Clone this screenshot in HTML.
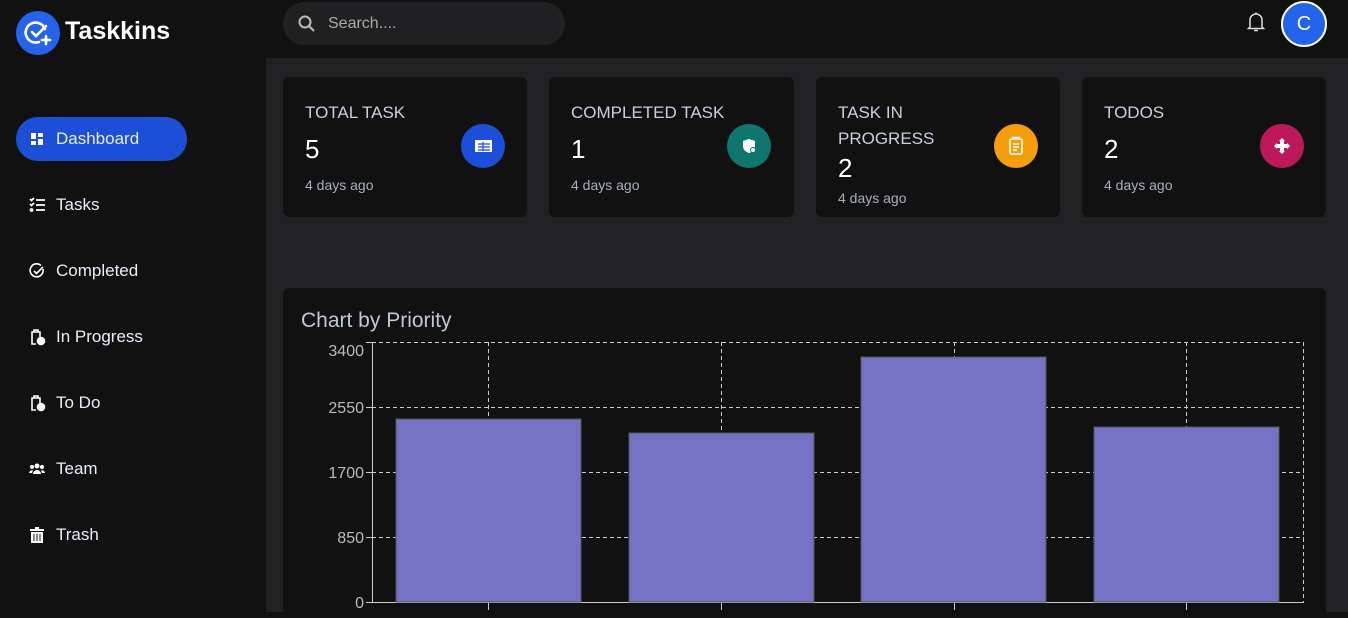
<!DOCTYPE html>
<html><head><style>
*{margin:0;padding:0;box-sizing:border-box}
body{width:1348px;height:612px;overflow:hidden;background:#111;font-family:"Liberation Sans",sans-serif;color:#fff;position:relative}
.abs{position:absolute}
.main{left:266px;top:58px;width:1082px;height:554px;background:#212123}
.card{background:#111;border-radius:6px;position:absolute;top:77px;height:140px;width:244px}
.card .t{position:absolute;left:22px;top:23px;font-size:17px;color:#c8d0e0;line-height:26px;width:200px}
.card .n{position:absolute;left:22px;font-size:26px;color:#fff}
.card .d{position:absolute;left:22px;font-size:14px;color:#a8b0bc}
.card .c{position:absolute;left:178px;top:47px;width:44px;height:44px;border-radius:50%}
.nav{position:absolute;left:28px;font-size:17px;color:#e8eef8;display:flex;align-items:center;gap:10px}
.nav svg{width:18px;height:18px}
</style></head><body>
<div class="abs" style="left:16px;top:11px;width:44px;height:44px;border-radius:50%;background:#2563eb">
<svg width="44" height="44" viewBox="0 0 44 44" fill="none" stroke="#fff" stroke-width="2.6" stroke-linecap="round"><path d="M29 18a10 10 0 1 0-6 13"/><path d="M16 21l4 4 10-10"/><path d="M30 25v8M26 29h8"/></svg></div>
<div class="abs" style="left:65px;top:17px;font-size:25px;font-weight:bold">Taskkins</div>
<div class="abs" style="left:16px;top:117px;width:171px;height:44px;border-radius:22px;background:#1d4ed8"></div>
<div class="nav" style="top:129px"><svg viewBox="0 0 18 18" fill="#fff"><rect x="3" y="3" width="5" height="6"/><rect x="10" y="3" width="5" height="4"/><rect x="3" y="11" width="5" height="4"/><rect x="10" y="9" width="5" height="6"/></svg>Dashboard</div>
<div class="nav" style="top:195px"><svg viewBox="0 0 18 18" stroke="#fff" stroke-width="1.8" fill="none"><path d="M2 3l1.5 1.5L6 2M2 8l1.5 1.5L6 7M8 4h9M8 9h9M8 14h9"/><circle cx="3.5" cy="14" r="1" fill="#fff"/></svg>Tasks</div>
<div class="nav" style="top:261px"><svg viewBox="0 0 18 18" stroke="#fff" stroke-width="1.6" fill="none"><path d="M15 7a6.5 6.5 0 1 1-2-3.5"/><path d="M6 9l2.5 2.5L15 5"/></svg>Completed</div>
<div class="nav" style="top:327px"><svg viewBox="0 0 18 18" stroke="#fff" stroke-width="1.6" fill="none"><path d="M8 16H4V4h8v5M6 4V2h4v2"/><circle cx="13" cy="13" r="3.5" fill="#fff"/></svg>In Progress</div>
<div class="nav" style="top:393px"><svg viewBox="0 0 18 18" stroke="#fff" stroke-width="1.6" fill="none"><path d="M8 16H4V4h8v5M6 4V2h4v2"/><circle cx="13" cy="13" r="3.5" fill="#fff"/></svg>To Do</div>
<div class="nav" style="top:459px"><svg viewBox="0 0 18 18" fill="#fff"><circle cx="9" cy="6" r="2.5"/><circle cx="4" cy="7" r="2"/><circle cx="14" cy="7" r="2"/><path d="M5 14a4 4 0 0 1 8 0zM1 13a3 3 0 0 1 4-2.5L4 13zM17 13a3 3 0 0 0-4-2.5L14 13z"/></svg>Team</div>
<div class="nav" style="top:525px"><svg viewBox="0 0 18 18" fill="#fff"><rect x="2" y="3" width="14" height="2"/><rect x="7" y="1" width="4" height="2"/><path d="M3 6h12v11H3zM5.5 8v7h1V8zM8.5 8v7h1V8zM11.5 8v7h1V8z" fill-rule="evenodd"/></svg>Trash</div>
<div class="abs" style="left:283px;top:2px;width:282px;height:43px;border-radius:22px;background:#202022"></div>
<svg class="abs" style="left:297px;top:14px" width="20" height="20" viewBox="0 0 20 20" stroke="#bbb" stroke-width="2" fill="none"><circle cx="8" cy="8" r="5.5"/><path d="M12 12l5 5"/></svg>
<div class="abs" style="left:328px;top:15px;font-size:16px;color:#aaa">Search....</div>
<svg class="abs" style="left:1246px;top:11px" width="20" height="22" viewBox="0 0 20 22" stroke="#ddd" stroke-width="1.5" fill="none"><path d="M4 16V9a6 6 0 0 1 12 0v7l1.5 1.5h-15zM8 19.5h4M10 3V1.5"/></svg>
<div class="abs" style="left:1281px;top:1px;width:46px;height:46px;border-radius:50%;background:#2563eb;border:2px solid #fff;font-size:20px;text-align:center;line-height:42px">C</div>
<div class="abs main"></div>
<div class="card" style="left:283px"><div class="t">TOTAL TASK</div><div class="n" style="top:57px">5</div><div class="d" style="top:100px">4 days ago</div><div class="c" style="background:#1d4ed8"><svg width="44" height="44" viewBox="0 0 44 44"><rect x="14" y="16" width="17" height="12" fill="#fff"/><path d="M17 20h12M17 23h12M17 26h12M22 18v9" stroke="#1d4ed8" stroke-width="1.2"/></svg></div></div>
<div class="card" style="left:549px;width:245px"><div class="t">COMPLETED TASK</div><div class="n" style="top:57px">1</div><div class="d" style="top:100px">4 days ago</div><div class="c" style="background:#0f766e"><svg width="44" height="44" viewBox="0 0 44 44"><path d="M22 15l-6 2v5c0 4 3 6 6 7 3-1 6-3 6-7v-5z" fill="#fff"/><circle cx="26" cy="26" r="3" fill="#0f766e"/><circle cx="26" cy="26" r="2" fill="#fff"/></svg></div></div>
<div class="card" style="left:816px"><div class="t" style="width:140px">TASK IN PROGRESS</div><div class="n" style="top:76px">2</div><div class="d" style="top:113px">4 days ago</div><div class="c" style="background:#f59e0b"><svg width="44" height="44" viewBox="0 0 44 44" stroke="#fff" stroke-width="1.6" fill="none"><rect x="16" y="15" width="12" height="15" rx="1.5"/><path d="M19 15v-1.5h6V15M19 20h6M19 23h6M19 26h4"/></svg></div></div>
<div class="card" style="left:1082px"><div class="t">TODOS</div><div class="n" style="top:57px">2</div><div class="d" style="top:100px">4 days ago</div><div class="c" style="background:#be185d"><svg width="44" height="44" viewBox="0 0 44 44" fill="#fff"><path d="M22 14l3 3h-6zM22 30l3-3h-6zM14 22l3-3v6zM30 22l-3-3v6z"/><rect x="20" y="17" width="4" height="10"/><rect x="17" y="20" width="10" height="4"/></svg></div></div>
<div class="abs" style="left:283px;top:288px;width:1043px;height:330px;background:#111;border-radius:6px"></div>
<div class="abs" style="left:301px;top:309px;font-size:21px;color:#c0c8d8">Chart by Priority</div>
<svg class="abs" style="left:283px;top:330px" width="1043" height="282" viewBox="283 330 1043 282" font-family="Liberation Sans" font-size="16" fill="#bbb">
<g stroke="#ccc" stroke-dasharray="4 3" stroke-width="1">
<path d="M372 342.5H1304M372 407.5H1304M372 472.5H1304M372 537.5H1304M1303.5 342V602M488.5 342V602M721.5 342V602M954.5 342V602M1186.5 342V602"/>
</g>
<g stroke="#ccc"><path d="M372.5 342V602M366 602.5H1304M366 342.5h6M366 407.5h6M366 472.5h6M366 537.5h6M488.5 602v8M721.5 602v8M954.5 602v8M1186.5 602v8"/></g>
<g fill="#7571c4" stroke="#555" stroke-width="1"><rect x="396" y="419" width="185" height="183"/><rect x="629" y="433" width="185" height="169"/><rect x="861" y="357" width="185" height="245"/><rect x="1094" y="427" width="185" height="175"/></g>
<g text-anchor="end"><text x="364" y="356">3400</text><text x="364" y="413">2550</text><text x="364" y="478">1700</text><text x="364" y="543">850</text><text x="364" y="608">0</text></g>
</svg>
</body></html>
